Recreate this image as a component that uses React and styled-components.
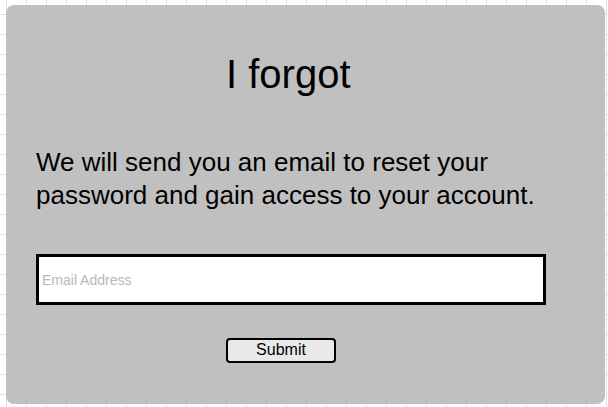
import React from 'react';
import styled, { createGlobalStyle } from 'styled-components';

const GlobalStyle = createGlobalStyle`
  html, body {
    margin: 0;
    padding: 0;
  }
  body {
    font-family: "Liberation Sans", Arial, sans-serif;
    background-color: #ffffff;
    /* light grid paper behind the card */
    background-image:
      linear-gradient(to right, #e2e2e2 1px, transparent 1px),
      linear-gradient(to bottom, #e2e2e2 1px, transparent 1px);
    background-size: 20px 20px;
    background-position: 6px 14px;
    width: 608px;
    height: 407px;
    overflow: hidden;
  }
`;

const Card = styled.div`
  box-sizing: border-box;
  width: 599px;
  height: 399px;
  margin: 5px 0 0 6px;
  padding: 46px 30px 0;
  background-color: #c0c0c0;
  border-radius: 8px;
  display: flex;
  flex-direction: column;
  align-items: flex-start;
`;

const Title = styled.h1`
  margin: 0 0 0 190px;
  font-size: 40px;
  line-height: 46px;
  font-weight: normal;
  color: #000;
`;

const Message = styled.p`
  margin: 49px 0 0;
  width: 510px;
  font-size: 26px;
  line-height: 33px;
  color: #000;
`;

const EmailInput = styled.input`
  box-sizing: border-box;
  margin-top: 42px;
  width: 510px;
  height: 51px;
  padding: 0 3px;
  border: 3px solid #000;
  background: #fff;
  font-family: "Liberation Sans", Arial, sans-serif;
  font-size: 14px;
  outline: none;

  &::placeholder {
    color: #b9b9b9;
  }
`;

const SubmitButton = styled.button`
  box-sizing: border-box;
  margin: 33px 0 0 190px;
  width: 110px;
  height: 25px;
  padding: 0 0 2px;
  border: 2px solid #000;
  border-radius: 4px;
  background-color: #e9e9e9;
  color: #000;
  font-family: "Liberation Sans", Arial, sans-serif;
  font-size: 16px;
  line-height: 18px;
  cursor: pointer;
`;

function App() {
  return (
    <>
      <GlobalStyle />
      <Card>
        <Title>I forgot</Title>
        <Message>
          We will send you an email to reset your password and gain access to your account.
        </Message>
        <EmailInput type="email" placeholder="Email Address" />
        <SubmitButton type="button">Submit</SubmitButton>
      </Card>
    </>
  );
}

export default App;
